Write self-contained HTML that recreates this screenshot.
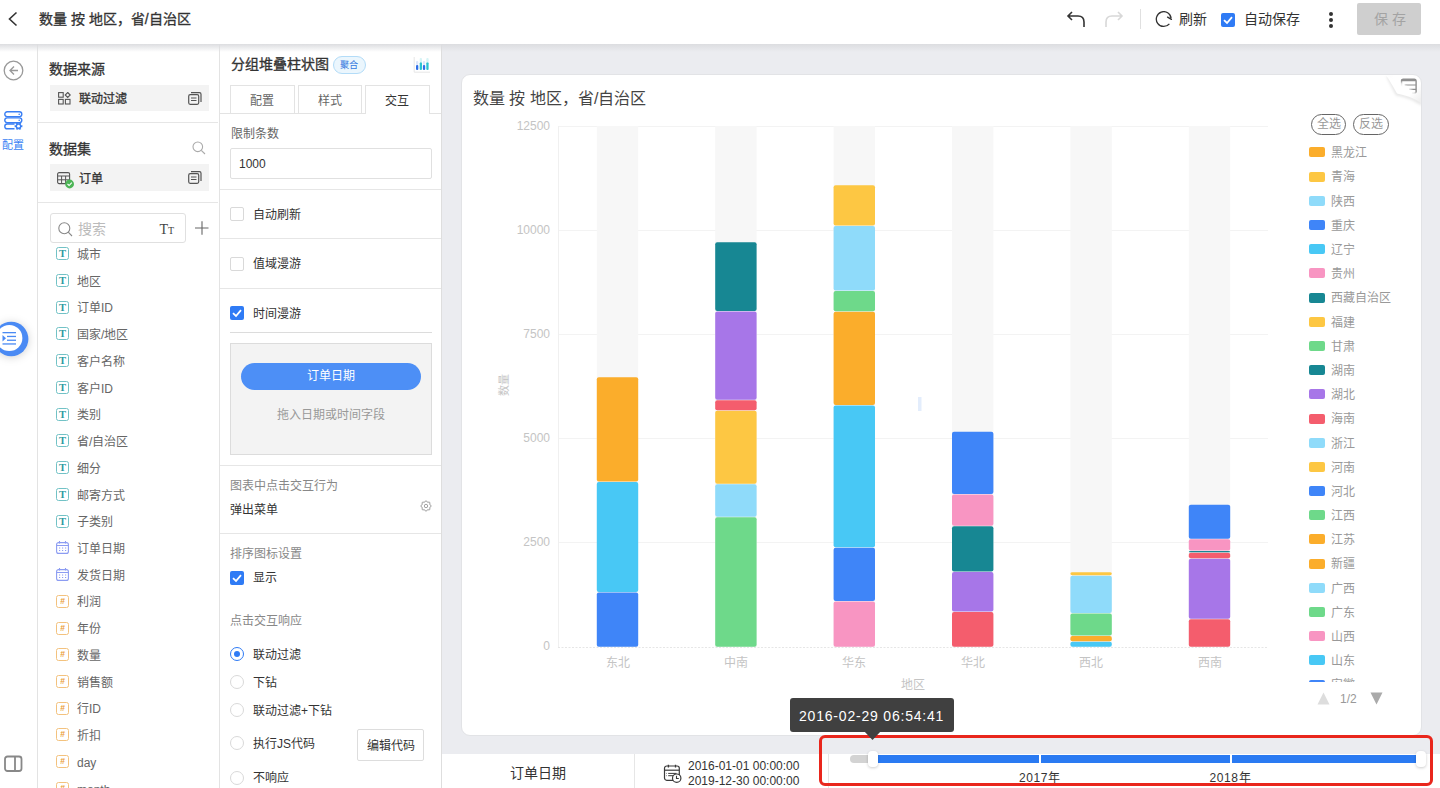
<!DOCTYPE html>
<html lang="zh-CN"><head><meta charset="utf-8">
<style>
*{box-sizing:border-box;margin:0;padding:0}
html,body{width:1440px;height:788px;overflow:hidden;background:#fff;font-family:"Liberation Sans",sans-serif;color:#333}
.a{position:absolute}
.t{position:absolute;white-space:nowrap;line-height:1}
#hdr{left:0;top:0;width:1440px;height:44px;background:#fff;z-index:5}
#hdrsh{left:0;top:44px;width:1440px;height:8px;background:linear-gradient(#dcdde0,rgba(235,236,240,0));z-index:4}
#rail{left:0;top:44px;width:38px;height:744px;background:#fff;border-right:1px solid #e3e3e3}
#data{left:38px;top:44px;width:182px;height:744px;background:#fff;border-right:1px solid #e3e3e3}
#cfg{left:220px;top:44px;width:222px;height:744px;background:#fff;border-right:1px solid #dedede}
#canvas{left:442px;top:44px;width:998px;height:710px;background:#ebecf0}
#card{left:461px;top:74px;width:961px;height:662px;background:#fff;border:1px solid #e2e3e6;border-radius:9px}
#bot{left:442px;top:754px;width:998px;height:34px;background:#fff}
.sep{position:absolute;height:1px;background:#e6e6e6}
.cb{position:absolute;width:14px;height:14px;border:1px solid #d9d9d9;border-radius:2px;background:#fff}
.cbk{position:absolute;width:14px;height:14px;border-radius:2px;background:#2f7bf5}
.rd{position:absolute;width:14px;height:14px;border:1px solid #d9d9d9;border-radius:50%;background:#fff}
.f{position:absolute;left:77px;font-size:12px;color:#666;line-height:1;white-space:nowrap}
.fi{position:absolute;left:56px;width:13px;height:13px;border-radius:2.5px;border:1px solid #72c2c6;color:#2f9aa2;font-size:10.5px;line-height:12px;text-align:center;font-family:'Liberation Serif',serif;font-weight:bold}
.fd{position:absolute;left:56px;width:13px;height:13px}
.fn{position:absolute;left:56px;width:13px;height:13px;border-radius:2.5px;border:1px solid #f3c27e;color:#eb9d35;font-size:8.5px;line-height:11.5px;text-align:center;font-weight:bold}
.lg{position:absolute;left:1309px;width:16px;height:10px;border-radius:2px}
.lt{position:absolute;left:1330.5px;font-size:12px;color:#999;line-height:1;white-space:nowrap}
</style></head><body>

<!-- header -->
<div id="hdr" class="a">
  <svg class="a" style="left:7px;top:11px" width="12" height="16" viewBox="0 0 12 16"><path d="M9.5 1.5 L2.5 8 L9.5 14.5" fill="none" stroke="#333" stroke-width="1.6"></path></svg>
  <div class="t" style="left:39px;top:12px;font-size:14px;-webkit-text-stroke:0.3px #333;color:#333">数量 按 地区，省/自治区</div>
  <!-- undo -->
  <svg class="a" style="left:1066px;top:10px" width="20" height="18" viewBox="0 0 20 18"><path d="M6 2 L2 6 L6 10 M2 6 H12 Q18 6 18 12 V17" fill="none" stroke="#333" stroke-width="1.6"></path></svg>
  <svg class="a" style="left:1104px;top:10px" width="20" height="18" viewBox="0 0 20 18"><path d="M14 2 L18 6 L14 10 M18 6 H8 Q2 6 2 12 V17" fill="none" stroke="#d8d8d8" stroke-width="1.6"></path></svg>
  <div class="a" style="left:1140px;top:9px;width:1px;height:20px;background:#e0e0e0"></div>
  <svg class="a" style="left:1154px;top:11px" width="20" height="18" viewBox="0 0 20 18"><path d="M15.4 12.8 A7.4 7.4 0 1 1 17.1 7.4" fill="none" stroke="#333" stroke-width="1.3"></path><path d="M13.6 6.2 L17.4 8.3" fill="none" stroke="#333" stroke-width="1.4" stroke-linecap="round"></path></svg>
  <div class="t" style="left:1179px;top:12px;font-size:14px;color:#333">刷新</div>
  <div class="cbk" style="left:1221px;top:13px"><svg width="14" height="14" viewBox="0 0 14 14"><path d="M3 7.2 L6 10 L11 4.2" fill="none" stroke="#fff" stroke-width="1.8"></path></svg></div>
  <div class="t" style="left:1244px;top:12px;font-size:14px;color:#333">自动保存</div>
  <div class="a" style="left:1329px;top:12px;width:4px;height:4px;border-radius:2px;background:#333"></div>
  <div class="a" style="left:1329px;top:18px;width:4px;height:4px;border-radius:2px;background:#333"></div>
  <div class="a" style="left:1329px;top:24px;width:4px;height:4px;border-radius:2px;background:#333"></div>
  <div class="a" style="left:1357px;top:3px;width:64px;height:32px;background:#cfcfcf;border-radius:2px"></div>
  <div class="t" style="left:1374px;top:12px;font-size:14px;color:#a3a3a3;">保 存</div>
</div>
<div id="hdrsh" class="a"></div>

<!-- left rail -->
<div id="rail" class="a"></div>
<svg class="a" style="left:3px;top:60px" width="21" height="21" viewBox="0 0 21 21"><circle cx="10.5" cy="10.5" r="9.3" fill="none" stroke="#999" stroke-width="1.3"></circle><path d="M11 6.5 L7 10.5 L11 14.5 M7 10.5 H15" fill="none" stroke="#999" stroke-width="1.3"></path></svg>
<svg class="a" style="left:4px;top:111px" width="20" height="20" viewBox="0 0 20 20"><rect x="0.8" y="0.8" width="17" height="4.8" rx="2.4" fill="none" stroke="#3a7ff4" stroke-width="1.4"></rect><rect x="0.8" y="6.9" width="17" height="4.8" rx="2.4" fill="none" stroke="#3a7ff4" stroke-width="1.4"></rect><path d="M10.5 17.8 H3.2 A2.4 2.4 0 0 1 3.2 13 H10.5" fill="none" stroke="#3a7ff4" stroke-width="1.4"></path><circle cx="15.2" cy="3.2" r="0.8" fill="#3a7ff4"></circle><circle cx="15.2" cy="9.3" r="0.8" fill="#3a7ff4"></circle><path d="M18.34 14.09 L18.34 16.31 L17.51 15.95 L16.65 17.43 L17.38 17.98 L15.46 19.08 L15.36 18.18 L13.64 18.18 L13.54 19.08 L11.62 17.98 L12.35 17.43 L11.49 15.95 L10.66 16.31 L10.66 14.09 L11.49 14.45 L12.35 12.97 L11.62 12.42 L13.54 11.32 L13.64 12.22 L15.36 12.22 L15.46 11.32 L17.38 12.42 L16.65 12.97 L17.51 14.45 Z" fill="#3a7ff4"></path><circle cx="14.5" cy="15.2" r="1.4" fill="#fff"></circle></svg>
<div class="t" style="left:2px;top:140px;font-size:11px;color:#3a7ff4">配置</div>
<svg class="a" style="left:-8px;top:319px;filter:drop-shadow(0 1px 4px rgba(0,0,0,0.18))" width="40" height="40" viewBox="-8 319 40 40"><circle cx="11.2" cy="339" r="17.2" fill="#4a8af4"></circle><circle cx="9.3" cy="338" r="13.1" fill="#fff"></circle></svg>
<svg class="a" style="left:2px;top:332px" width="15" height="13" viewBox="0 0 15 13"><rect x="0.5" y="0" width="13.5" height="1.3" fill="#4a8af4"></rect><rect x="5" y="3.8" width="9" height="1.3" fill="#4a8af4"></rect><rect x="5" y="7.6" width="9" height="1.3" fill="#4a8af4"></rect><rect x="0.5" y="11.3" width="13.5" height="1.3" fill="#4a8af4"></rect><path d="M0.5 3 L4 6.3 L0.5 9.6 Z" fill="#4a8af4"></path></svg>
<svg class="a" style="left:4px;top:755px" width="19" height="18" viewBox="0 0 19 18"><rect x="1" y="1.5" width="16.5" height="14.5" rx="2.5" fill="none" stroke="#888" stroke-width="1.8"></rect><path d="M11 1.5 V16" stroke="#888" stroke-width="1.8"></path></svg>

<!-- data panel -->
<div id="data" class="a"></div>
<div class="t" style="left:49px;top:62px;font-size:14px;-webkit-text-stroke:0.3px #333;color:#333">数据来源</div>
<div class="a" style="left:50px;top:85px;width:159px;height:26px;background:#f3f3f3"></div>
<svg class="a" style="left:58px;top:92px" width="13" height="13" viewBox="0 0 13 13"><rect x="0.6" y="0.6" width="4.6" height="4.6" fill="none" stroke="#555" stroke-width="1.1"></rect><rect x="0.6" y="7.4" width="4.6" height="4.6" fill="none" stroke="#555" stroke-width="1.1"></rect><rect x="7.4" y="7.4" width="4.6" height="4.6" fill="none" stroke="#555" stroke-width="1.1"></rect><path d="M9.7 0.5 L12.2 3 L9.7 5.5 L7.2 3 Z" fill="none" stroke="#555" stroke-width="1.1"></path></svg>
<div class="t" style="left:79px;top:93px;font-size:12px;-webkit-text-stroke:0.3px #333;color:#333">联动过滤</div>
<svg class="a" style="left:188px;top:92px" width="14" height="13" viewBox="0 0 14 13"><rect x="0.7" y="2.7" width="10" height="9.6" rx="1.5" fill="none" stroke="#555" stroke-width="1.2"></rect><path d="M3 0.7 H11.5 A1.5 1.5 0 0 1 13 2.2 V10" fill="none" stroke="#555" stroke-width="1.2"></path><path d="M3 6 H8.5 M3 8.5 H8.5" stroke="#555" stroke-width="1"></path></svg>
<div class="sep" style="left:38px;top:122px;width:180px"></div>
<div class="t" style="left:49px;top:142px;font-size:14px;-webkit-text-stroke:0.3px #333;color:#333">数据集</div>
<svg class="a" style="left:192px;top:141px" width="14" height="14" viewBox="0 0 14 14"><circle cx="5.8" cy="5.8" r="4.8" fill="none" stroke="#aaa" stroke-width="1.1"></circle><path d="M9.3 9.3 L13 13" stroke="#aaa" stroke-width="1.1"></path></svg>
<div class="a" style="left:50px;top:164px;width:159px;height:27px;background:#f3f3f3"></div>
<svg class="a" style="left:57px;top:172px" width="18" height="17" viewBox="0 0 18 17"><rect x="0.6" y="0.6" width="12" height="11" rx="1.5" fill="none" stroke="#555" stroke-width="1.1"></rect><path d="M0.6 4 H12.6 M0.6 7.8 H12.6 M4.6 4 V11.6 M8.6 4 V11.6" stroke="#555" stroke-width="1"></path><circle cx="12.6" cy="12" r="4.4" fill="#4cb556"></circle><path d="M10.5 12 L12.1 13.5 L14.8 10.6" fill="none" stroke="#fff" stroke-width="1.1"></path></svg>
<div class="t" style="left:79px;top:172.5px;font-size:12px;-webkit-text-stroke:0.3px #333;color:#333">订单</div>
<svg class="a" style="left:188px;top:171px" width="14" height="13" viewBox="0 0 14 13"><rect x="0.7" y="2.7" width="10" height="9.6" rx="1.5" fill="none" stroke="#555" stroke-width="1.2"></rect><path d="M3 0.7 H11.5 A1.5 1.5 0 0 1 13 2.2 V10" fill="none" stroke="#555" stroke-width="1.2"></path><path d="M3 6 H8.5 M3 8.5 H8.5" stroke="#555" stroke-width="1"></path></svg>
<div class="sep" style="left:38px;top:202px;width:180px"></div>
<div class="a" style="left:50px;top:213px;width:136px;height:30px;border:1px solid #e0e0e0;border-radius:3px;background:#fff"></div>
<svg class="a" style="left:58px;top:222px" width="15" height="15" viewBox="0 0 15 15"><circle cx="6.3" cy="6.3" r="5.5" fill="none" stroke="#888" stroke-width="1.1"></circle><path d="M10.2 10.2 L14 14" stroke="#888" stroke-width="1.1"></path></svg>
<div class="t" style="left:78px;top:222px;font-size:14px;color:#bbb">搜索</div>
<div class="t" style="left:159.5px;top:222.5px;font-size:14px;color:#444;font-family:'Liberation Serif',serif">T<span style="font-size:10px">T</span></div>
<svg class="a" style="left:195px;top:221px" width="14" height="14" viewBox="0 0 14 14"><path d="M7 0.3 V13.7 M0 7 H13.5" stroke="#666" stroke-width="1.1"></path></svg>
<div id="fields"><div class="a" style="left:38px;top:243px;width:180px;height:545px;overflow:hidden"><div class="a" style="left:-38px;top:-243px;width:300px;height:1100px"><div class="fi" style="top:247.1px">T</div><div class="f" style="top:248.8px">城市</div><div class="fi" style="top:273.8px">T</div><div class="f" style="top:275.5px">地区</div><div class="fi" style="top:300.6px">T</div><div class="f" style="top:302.3px">订单ID</div><div class="fi" style="top:327.3px">T</div><div class="f" style="top:329.0px">国家/地区</div><div class="fi" style="top:354.1px">T</div><div class="f" style="top:355.8px">客户名称</div><div class="fi" style="top:380.8px">T</div><div class="f" style="top:382.5px">客户ID</div><div class="fi" style="top:407.5px">T</div><div class="f" style="top:409.2px">类别</div><div class="fi" style="top:434.3px">T</div><div class="f" style="top:436.0px">省/自治区</div><div class="fi" style="top:461.0px">T</div><div class="f" style="top:462.7px">细分</div><div class="fi" style="top:487.8px">T</div><div class="f" style="top:489.5px">邮寄方式</div><div class="fi" style="top:514.5px">T</div><div class="f" style="top:516.2px">子类别</div><svg class="fd" style="top:541.2px" viewBox="0 0 13 13"><rect x="0.6" y="1.6" width="11.8" height="10.8" rx="2" fill="none" stroke="#8c9cf2" stroke-width="1.1"></rect><path d="M0.6 4.5 H12.4 M3.5 0 V2.5 M9.5 0 V2.5" stroke="#8c9cf2" stroke-width="1.1"></path><path d="M3 7 H4.2 M6 7 H7.2 M9 7 H10.2 M3 9.5 H4.2 M6 9.5 H7.2 M9 9.5 H10.2" stroke="#8c9cf2" stroke-width="1"></path></svg><div class="f" style="top:542.9px">订单日期</div><svg class="fd" style="top:568.0px" viewBox="0 0 13 13"><rect x="0.6" y="1.6" width="11.8" height="10.8" rx="2" fill="none" stroke="#8c9cf2" stroke-width="1.1"></rect><path d="M0.6 4.5 H12.4 M3.5 0 V2.5 M9.5 0 V2.5" stroke="#8c9cf2" stroke-width="1.1"></path><path d="M3 7 H4.2 M6 7 H7.2 M9 7 H10.2 M3 9.5 H4.2 M6 9.5 H7.2 M9 9.5 H10.2" stroke="#8c9cf2" stroke-width="1"></path></svg><div class="f" style="top:569.7px">发货日期</div><div class="fn" style="top:594.7px">#</div><div class="f" style="top:596.4px">利润</div><div class="fn" style="top:621.5px">#</div><div class="f" style="top:623.2px">年份</div><div class="fn" style="top:648.2px">#</div><div class="f" style="top:649.9px">数量</div><div class="fn" style="top:674.9px">#</div><div class="f" style="top:676.6px">销售额</div><div class="fn" style="top:701.7px">#</div><div class="f" style="top:703.4px">行ID</div><div class="fn" style="top:728.4px">#</div><div class="f" style="top:730.1px">折扣</div><div class="fn" style="top:755.2px">#</div><div class="f" style="top:756.9px">day</div><div class="fn" style="top:781.9px">#</div><div class="f" style="top:783.6px">month</div></div></div></div>

<!-- config panel -->
<div id="cfg" class="a"></div>
<div class="t" style="left:231px;top:57px;font-size:14px;-webkit-text-stroke:0.3px #333;color:#333">分组堆叠柱状图</div>
<div class="a" style="left:333px;top:56px;width:33px;height:18px;border:1px solid #b3dcf8;background:#ebf6fd;border-radius:9px"></div>
<div class="t" style="left:340px;top:60.5px;font-size:9.2px;color:#3478e0">聚合</div>
<svg class="a" style="left:413px;top:56px" width="18" height="18" viewBox="0 0 18 18"><path d="M1.2 1 V16.2 H17" fill="none" stroke="#e6e6e6" stroke-width="1"></path><rect x="3" y="9" width="2.3" height="5" rx="1" fill="#2f6fe8"></rect><rect x="3" y="5" width="2.3" height="4" rx="1" fill="#dde6fb"></rect><rect x="6.7" y="6.3" width="2.3" height="7.7" rx="1" fill="#2cc4d0"></rect><rect x="6.7" y="2" width="2.3" height="4.3" rx="1" fill="#d6f4f6"></rect><rect x="9.9" y="9" width="2.3" height="5" rx="1" fill="#2f6fe8"></rect><rect x="9.9" y="5" width="2.3" height="4" rx="1" fill="#dde6fb"></rect><rect x="13.3" y="6.3" width="2.3" height="7.7" rx="1" fill="#2cc4d0"></rect><rect x="13.3" y="2" width="2.3" height="4.3" rx="1" fill="#d6f4f6"></rect></svg>
<div class="a" style="left:230px;top:85px;width:65px;height:29px;border:1px solid #e3e3e3;border-bottom:none;background:#fff"></div>
<div class="a" style="left:298px;top:85px;width:64px;height:29px;border:1px solid #e3e3e3;border-bottom:none;background:#fff"></div>
<div class="sep" style="left:220px;top:113px;width:221px;background:#e3e3e3"></div>
<div class="a" style="left:365px;top:85px;width:65px;height:29px;border:1px solid #e3e3e3;border-bottom:none;background:#fff"></div>
<div class="t" style="left:250px;top:95px;font-size:12px;color:#666">配置</div>
<div class="t" style="left:318px;top:95px;font-size:12px;color:#666">样式</div>
<div class="t" style="left:385px;top:95px;font-size:12px;color:#333">交互</div>
<div class="t" style="left:231px;top:128px;font-size:12px;color:#666">限制条数</div>
<div class="a" style="left:230px;top:148px;width:202px;height:31px;border:1px solid #e0e0e0;border-radius:2px"></div>
<div class="t" style="left:239px;top:158px;font-size:12px;color:#333">1000</div>
<div class="sep" style="left:220px;top:189px;width:221px"></div>
<div class="cb" style="left:230px;top:207px"></div>
<div class="t" style="left:253px;top:209px;font-size:12px;color:#333">自动刷新</div>
<div class="sep" style="left:220px;top:238px;width:221px"></div>
<div class="cb" style="left:230px;top:257px"></div>
<div class="t" style="left:253px;top:258px;font-size:12px;color:#333">值域漫游</div>
<div class="sep" style="left:220px;top:288px;width:221px"></div>
<div class="cbk" style="left:230px;top:306px"><svg width="14" height="14" viewBox="0 0 14 14"><path d="M3 7.2 L6 10 L11 4.2" fill="none" stroke="#fff" stroke-width="1.8"></path></svg></div>
<div class="t" style="left:253px;top:308px;font-size:12px;color:#333">时间漫游</div>
<div class="sep" style="left:230px;top:332px;width:202px;background:#dcdcdc"></div>
<div class="a" style="left:230px;top:343px;width:202px;height:112px;border:1px solid #dcdcdc;background:#f3f3f3"></div>
<div class="a" style="left:241px;top:363px;width:180px;height:27px;border-radius:13.5px;background:#4d8ff6"></div>
<div class="t" style="left:307px;top:370px;font-size:12px;color:#fff">订单日期</div>
<div class="t" style="left:277px;top:409px;font-size:12px;color:#999">拖入日期或时间字段</div>
<div class="sep" style="left:220px;top:465px;width:221px"></div>
<div class="t" style="left:230px;top:480px;font-size:12px;color:#888">图表中点击交互行为</div>
<div class="t" style="left:230px;top:503.5px;font-size:12px;color:#333">弹出菜单</div>
<svg class="a" style="left:419.7px;top:499.6px" width="12" height="12" viewBox="0 0 12 12"><path d="M11.15 6.00 L11.07 6.33 L10.83 6.64 L10.51 6.90 L10.18 7.12 L9.90 7.33 L9.74 7.55 L9.70 7.82 L9.75 8.16 L9.82 8.56 L9.87 8.97 L9.82 9.35 L9.64 9.64 L9.35 9.82 L8.97 9.87 L8.56 9.82 L8.16 9.75 L7.82 9.70 L7.55 9.74 L7.33 9.90 L7.12 10.18 L6.90 10.51 L6.64 10.83 L6.33 11.07 L6.00 11.15 L5.67 11.07 L5.36 10.83 L5.10 10.51 L4.88 10.18 L4.67 9.90 L4.45 9.74 L4.18 9.70 L3.84 9.75 L3.44 9.82 L3.03 9.87 L2.65 9.82 L2.36 9.64 L2.18 9.35 L2.13 8.97 L2.18 8.56 L2.25 8.16 L2.30 7.82 L2.26 7.55 L2.10 7.33 L1.82 7.12 L1.49 6.90 L1.17 6.64 L0.93 6.33 L0.85 6.00 L0.93 5.67 L1.17 5.36 L1.49 5.10 L1.82 4.88 L2.10 4.67 L2.26 4.45 L2.30 4.18 L2.25 3.84 L2.18 3.44 L2.13 3.03 L2.18 2.65 L2.36 2.36 L2.65 2.18 L3.03 2.13 L3.44 2.18 L3.84 2.25 L4.18 2.30 L4.45 2.26 L4.67 2.10 L4.88 1.82 L5.10 1.49 L5.36 1.17 L5.67 0.93 L6.00 0.85 L6.33 0.93 L6.64 1.17 L6.90 1.49 L7.12 1.82 L7.33 2.10 L7.55 2.26 L7.82 2.30 L8.16 2.25 L8.56 2.18 L8.97 2.13 L9.35 2.18 L9.64 2.36 L9.82 2.65 L9.87 3.03 L9.82 3.44 L9.75 3.84 L9.70 4.18 L9.74 4.45 L9.90 4.67 L10.18 4.88 L10.51 5.10 L10.83 5.36 L11.07 5.67 Z" fill="none" stroke="#8f8f8f" stroke-width="1"/><circle cx="6" cy="6" r="1.7" fill="none" stroke="#999" stroke-width="0.9"/></svg>
<div class="sep" style="left:220px;top:533px;width:221px"></div>
<div class="t" style="left:230px;top:548px;font-size:12px;color:#888">排序图标设置</div>
<div class="cbk" style="left:230px;top:571px"><svg width="14" height="14" viewBox="0 0 14 14"><path d="M3 7.2 L6 10 L11 4.2" fill="none" stroke="#fff" stroke-width="1.8"></path></svg></div>
<div class="t" style="left:253px;top:572px;font-size:12px;color:#333">显示</div>
<div class="t" style="left:230px;top:615px;font-size:12px;color:#888">点击交互响应</div>
<div class="rd" style="left:230px;top:647px;border-color:#2f7bf5"><div class="a" style="left:3px;top:3px;width:6px;height:6px;border-radius:3px;background:#2f7bf5"></div></div>
<div class="t" style="left:253px;top:649px;font-size:12px;color:#333">联动过滤</div>
<div class="rd" style="left:230px;top:675px"></div>
<div class="t" style="left:253px;top:677px;font-size:12px;color:#333">下钻</div>
<div class="rd" style="left:230px;top:703px"></div>
<div class="t" style="left:253px;top:705px;font-size:12px;color:#333">联动过滤+下钻</div>
<div class="rd" style="left:230px;top:736px"></div>
<div class="t" style="left:253px;top:738px;font-size:12px;color:#333">执行JS代码</div>
<div class="a" style="left:357px;top:729px;width:67px;height:32px;border:1px solid #ddd;border-radius:2px;background:#fff"></div>
<div class="t" style="left:367px;top:740px;font-size:12px;color:#333">编辑代码</div>
<div class="rd" style="left:230px;top:771px"></div>
<div class="t" style="left:253px;top:772px;font-size:12px;color:#333">不响应</div>

<!-- canvas -->
<div id="canvas" class="a"></div>
<div id="card" class="a"></div>
<div class="t" style="left:473px;top:91px;font-size:16px;color:#444">数量 按 地区，省/自治区</div>
<svg class="a" style="left:1380px;top:74px" width="42" height="36" viewBox="1380 74 42 36"><defs><linearGradient id="fl" x1="1406.6" y1="90.4" x2="1409.4" y2="86.6" gradientUnits="userSpaceOnUse"><stop offset="0" stop-color="#fff" stop-opacity="1"></stop><stop offset="0.5" stop-color="#fff" stop-opacity="0.8"></stop><stop offset="1" stop-color="#fff" stop-opacity="0"></stop></linearGradient><linearGradient id="fs" x1="1400" y1="80" x2="1420" y2="100" gradientUnits="userSpaceOnUse"><stop offset="0.6" stop-color="#000" stop-opacity="0"></stop><stop offset="1" stop-color="#000" stop-opacity="0.06"></stop></linearGradient><filter id="bl" x="-50%" y="-50%" width="200%" height="200%"><feGaussianBlur stdDeviation="1.6"></feGaussianBlur></filter><clipPath id="cc"><rect x="1380" y="75" width="41" height="40" rx="8"></rect></clipPath></defs>
<g clip-path="url(#cc)"><path d="M1401.5 93 V81 A1.8 1.8 0 0 1 1403.3 79.2 H1414.3 A1.8 1.8 0 0 1 1416.1 81 V91.5 A1.8 1.8 0 0 1 1414.3 93.3 H1412" fill="none" stroke="#8f8f8f" stroke-width="1.4"></path><path d="M1401.5 80.2 H1416" stroke="#8f8f8f" stroke-width="2"></path><path d="M1404.6 85 H1416 M1409 89.4 H1416" stroke="#8f8f8f" stroke-width="1.2"></path>
<path d="M1388 76 Q1393 86 1397 94 Q1410 96 1422 104" fill="none" stroke="#000" stroke-opacity="0.13" stroke-width="2.5" filter="url(#bl)"></path>
<path d="M1386 75 Q1393 86 1397 93.6 Q1410 96 1422 103 L1422 75 Z" fill="url(#fl)"></path><path d="M1386 75 Q1393 86 1397 93.6 Q1410 96 1422 103 L1422 75 Z" fill="url(#fs)"></path></g></svg>
<svg id="chart" class="a" style="left:0;top:0" width="1440" height="788"><line x1="558" x2="1268" y1="126.5" y2="126.5" stroke="#f3f3f3"></line><line x1="558" x2="1268" y1="230.5" y2="230.5" stroke="#f3f3f3"></line><line x1="558" x2="1268" y1="334.5" y2="334.5" stroke="#f3f3f3"></line><line x1="558" x2="1268" y1="438.5" y2="438.5" stroke="#f3f3f3"></line><line x1="558" x2="1268" y1="542.5" y2="542.5" stroke="#f3f3f3"></line><line x1="558.5" x2="558.5" y1="126" y2="647" stroke="#f0f0f0"></line><line x1="558" x2="1268" y1="647.5" y2="647.5" stroke="#e6e6e6" stroke-dasharray="2 1.5"></line><text x="550" y="130.3" text-anchor="end" font-size="12" fill="#c4c4c4">12500</text><text x="550" y="234.3" text-anchor="end" font-size="12" fill="#c4c4c4">10000</text><text x="550" y="338.3" text-anchor="end" font-size="12" fill="#c4c4c4">7500</text><text x="550" y="442.3" text-anchor="end" font-size="12" fill="#c4c4c4">5000</text><text x="550" y="546.3" text-anchor="end" font-size="12" fill="#c4c4c4">2500</text><text x="550" y="650.3" text-anchor="end" font-size="12" fill="#c4c4c4">0</text><rect x="596.8" y="126" width="41.4" height="521" fill="#f7f7f7"></rect><rect x="596.8" y="592.45" width="41.4" height="54.299999999999955" rx="2" fill="#3f85f8"></rect><rect x="596.8" y="482.05" width="41.4" height="109.90000000000003" rx="2" fill="#48c8f5"></rect><rect x="596.8" y="377.35" width="41.4" height="104.19999999999999" rx="2" fill="#fbad2b"></rect><text x="617.5" y="667" text-anchor="middle" font-size="12" fill="#c4c4c4">东北</text><rect x="715.1999999999999" y="126" width="41.4" height="521" fill="#f7f7f7"></rect><rect x="715.1999999999999" y="517.25" width="41.4" height="129.5" rx="2" fill="#6ed98a"></rect><rect x="715.1999999999999" y="484.25" width="41.4" height="32.5" rx="2" fill="#8fdbfa"></rect><rect x="715.1999999999999" y="410.75" width="41.4" height="73" rx="2" fill="#fdc743"></rect><rect x="715.1999999999999" y="400.15" width="41.4" height="10.100000000000023" rx="2" fill="#f45d6d"></rect><rect x="715.1999999999999" y="311.45" width="41.4" height="88.19999999999999" rx="2" fill="#a776e8"></rect><rect x="715.1999999999999" y="242.25" width="41.4" height="68.69999999999999" rx="2" fill="#178793"></rect><text x="735.9" y="667" text-anchor="middle" font-size="12" fill="#c4c4c4">中南</text><rect x="833.5999999999999" y="126" width="41.4" height="521" fill="#f7f7f7"></rect><rect x="833.5999999999999" y="601.45" width="41.4" height="45.299999999999955" rx="2" fill="#f895c2"></rect><rect x="833.5999999999999" y="547.65" width="41.4" height="53.30000000000007" rx="2" fill="#3f85f8"></rect><rect x="833.5999999999999" y="405.45" width="41.4" height="141.7" rx="2" fill="#48c8f5"></rect><rect x="833.5999999999999" y="311.85" width="41.4" height="93.09999999999997" rx="2" fill="#fbad2b"></rect><rect x="833.5999999999999" y="290.95" width="41.4" height="20.400000000000034" rx="2" fill="#6ed98a"></rect><rect x="833.5999999999999" y="226.05" width="41.4" height="64.39999999999998" rx="2" fill="#8fdbfa"></rect><rect x="833.5999999999999" y="185.15" width="41.4" height="40.400000000000006" rx="2" fill="#fdc743"></rect><text x="854.3" y="667" text-anchor="middle" font-size="12" fill="#c4c4c4">华东</text><rect x="952" y="126" width="41.4" height="521" fill="#f7f7f7"></rect><rect x="952" y="612.05" width="41.4" height="34.700000000000045" rx="2" fill="#f45d6d"></rect><rect x="952" y="571.95" width="41.4" height="39.59999999999991" rx="2" fill="#a776e8"></rect><rect x="952" y="526.15" width="41.4" height="45.30000000000007" rx="2" fill="#178793"></rect><rect x="952" y="494.55" width="41.4" height="31.099999999999966" rx="2" fill="#f895c2"></rect><rect x="952" y="431.75" width="41.4" height="62.30000000000001" rx="2" fill="#3f85f8"></rect><text x="972.7" y="667" text-anchor="middle" font-size="12" fill="#c4c4c4">华北</text><rect x="1070.3999999999999" y="126" width="41.4" height="521" fill="#f7f7f7"></rect><rect x="1070.3999999999999" y="641.75" width="41.4" height="5" rx="2" fill="#48c8f5"></rect><rect x="1070.3999999999999" y="636.05" width="41.4" height="5.2000000000000455" rx="2" fill="#fbad2b"></rect><rect x="1070.3999999999999" y="613.55" width="41.4" height="22" rx="2" fill="#6ed98a"></rect><rect x="1070.3999999999999" y="575.75" width="41.4" height="37.299999999999955" rx="2" fill="#8fdbfa"></rect><rect x="1070.3999999999999" y="572.35" width="41.4" height="2.8999999999999773" rx="2" fill="#fdc743"></rect><text x="1091.1" y="667" text-anchor="middle" font-size="12" fill="#c4c4c4">西北</text><rect x="1188.8" y="126" width="41.4" height="521" fill="#f7f7f7"></rect><rect x="1188.8" y="619.15" width="41.4" height="27.600000000000023" rx="2" fill="#f45d6d"></rect><rect x="1188.8" y="558.75" width="41.4" height="59.89999999999998" rx="2" fill="#a776e8"></rect><rect x="1188.8" y="552.75" width="41.4" height="5.5" rx="2" fill="#f45d6d"></rect><rect x="1188.8" y="551.05" width="41.4" height="1.2000000000000455" rx="2" fill="#178793"></rect><rect x="1188.8" y="539.35" width="41.4" height="11.199999999999932" rx="2" fill="#f895c2"></rect><rect x="1188.8" y="504.65" width="41.4" height="34.200000000000045" rx="2" fill="#3f85f8"></rect><text x="1209.5" y="667" text-anchor="middle" font-size="12" fill="#c4c4c4">西南</text><text x="913" y="689" text-anchor="middle" font-size="12" fill="#c4c4c4">地区</text><text transform="translate(508,385) rotate(-90)" text-anchor="middle" font-size="11" fill="#c4c4c4">数量</text><rect x="918" y="397" width="3.5" height="14" fill="#e3edfc"></rect></svg>
<div id="legend"><div class="a" style="left:1300px;top:140px;width:110px;height:542px;overflow:hidden"><div class="a" style="left:-1300px;top:-140px;width:1440px;height:788px"><div class="lg" style="top:147.4px;background:#fbad2b"></div><div class="lt" style="top:147.2px">黑龙江</div><div class="lg" style="top:171.6px;background:#fdc743"></div><div class="lt" style="top:171.4px">青海</div><div class="lg" style="top:195.8px;background:#8fdbfa"></div><div class="lt" style="top:195.6px">陕西</div><div class="lg" style="top:220.0px;background:#3f85f8"></div><div class="lt" style="top:219.8px">重庆</div><div class="lg" style="top:244.2px;background:#48c8f5"></div><div class="lt" style="top:244.0px">辽宁</div><div class="lg" style="top:268.3px;background:#f895c2"></div><div class="lt" style="top:268.1px">贵州</div><div class="lg" style="top:292.5px;background:#178793"></div><div class="lt" style="top:292.3px">西藏自治区</div><div class="lg" style="top:316.7px;background:#fdc743"></div><div class="lt" style="top:316.5px">福建</div><div class="lg" style="top:340.9px;background:#6ed98a"></div><div class="lt" style="top:340.7px">甘肃</div><div class="lg" style="top:365.1px;background:#178793"></div><div class="lt" style="top:364.9px">湖南</div><div class="lg" style="top:389.3px;background:#a776e8"></div><div class="lt" style="top:389.1px">湖北</div><div class="lg" style="top:413.5px;background:#f45d6d"></div><div class="lt" style="top:413.3px">海南</div><div class="lg" style="top:437.7px;background:#8fdbfa"></div><div class="lt" style="top:437.5px">浙江</div><div class="lg" style="top:461.9px;background:#fdc743"></div><div class="lt" style="top:461.7px">河南</div><div class="lg" style="top:486.1px;background:#3f85f8"></div><div class="lt" style="top:485.9px">河北</div><div class="lg" style="top:510.2px;background:#6ed98a"></div><div class="lt" style="top:510.0px">江西</div><div class="lg" style="top:534.4px;background:#fbad2b"></div><div class="lt" style="top:534.2px">江苏</div><div class="lg" style="top:558.6px;background:#fbad2b"></div><div class="lt" style="top:558.4px">新疆</div><div class="lg" style="top:582.8px;background:#8fdbfa"></div><div class="lt" style="top:582.6px">广西</div><div class="lg" style="top:607.0px;background:#6ed98a"></div><div class="lt" style="top:606.8px">广东</div><div class="lg" style="top:631.2px;background:#f895c2"></div><div class="lt" style="top:631.0px">山西</div><div class="lg" style="top:655.4px;background:#48c8f5"></div><div class="lt" style="top:655.2px">山东</div><div class="lg" style="top:679.6px;background:#3f85f8"></div><div class="lt" style="top:679.4px">安徽</div></div></div><div class="a" style="left:1311px;top:114px;width:35px;height:21px;border:1px solid #666;border-radius:10.5px"></div><div class="t" style="left:1317px;top:118px;font-size:12px;color:#999">全选</div><div class="a" style="left:1353px;top:114px;width:36px;height:21px;border:1px solid #666;border-radius:10.5px"></div><div class="t" style="left:1359px;top:118px;font-size:12px;color:#999">反选</div><svg class="a" style="left:1317px;top:692px" width="13" height="13" viewBox="0 0 13 13"><path d="M6.5 0.5 L12.5 12.5 H0.5 Z" fill="#ddd"></path></svg><div class="t" style="left:1340px;top:693px;font-size:12px;color:#999">1/2</div><svg class="a" style="left:1370px;top:692px" width="13" height="13" viewBox="0 0 13 13"><path d="M0.5 0.5 H12.5 L6.5 12.5 Z" fill="#aaa"></path></svg></div>

<!-- bottom bar -->
<div id="bot" class="a"></div>
<div class="t" style="left:510px;top:766px;font-size:14px;color:#333">订单日期</div>
<div class="a" style="left:634px;top:754px;width:1px;height:34px;background:#e6e6e6"></div>
<svg class="a" style="left:662px;top:764px" width="22" height="22" viewBox="0 0 22 22"><rect x="2.5" y="2" width="14.8" height="14.3" rx="2.2" fill="none" stroke="#3a3a3a" stroke-width="1.2"/><path d="M6.4 0.8 V3.4 M13.5 0.8 V3.4" stroke="#3a3a3a" stroke-width="1.3"/><path d="M2.5 6.2 H17.3" stroke="#3a3a3a" stroke-width="1.2"/><path d="M4.5 9.4 H5 M4.5 11.7 H5 M6.2 9.4 H14.5 M6.2 11.7 H11" stroke="#3a3a3a" stroke-width="1"/><circle cx="14.7" cy="14.2" r="4.2" fill="#fff" stroke="#3a3a3a" stroke-width="1.2"/><path d="M14.5 11.8 V14.5 H16.8" fill="none" stroke="#3a3a3a" stroke-width="1.1"/></svg>
<div class="t" style="left:688px;top:760px;font-size:12px;color:#333">2016-01-01 00:00:00</div>
<div class="t" style="left:688px;top:775px;font-size:12px;color:#333">2019-12-30 00:00:00</div>
<div class="a" style="left:828px;top:754px;width:1px;height:34px;background:#e6e6e6"></div>
<div class="a" style="left:850px;top:755px;width:24px;height:8px;border-radius:4px;background:#d3d3d3"></div>
<div class="a" style="left:874px;top:755px;width:545px;height:8px;background:#2a7af2"></div>
<div class="a" style="left:1039px;top:755px;width:2px;height:8px;background:#fff"></div>
<div class="a" style="left:1230px;top:755px;width:2px;height:8px;background:#fff"></div>
<div class="a" style="left:868px;top:751px;width:10px;height:16px;border-radius:4px;background:#fff;box-shadow:0 1px 3px rgba(0,0,0,0.2)"></div>
<div class="a" style="left:1416px;top:751px;width:10px;height:16px;border-radius:4px;background:#fff;box-shadow:0 1px 3px rgba(0,0,0,0.2)"></div>
<div class="t" style="left:1019px;top:772px;font-size:12px;color:#333;letter-spacing:0.6px">2017年</div>
<div class="t" style="left:1209.5px;top:772px;font-size:12px;color:#333;letter-spacing:0.6px">2018年</div>
<div class="a" style="left:819px;top:735px;width:614px;height:51px;border:3px solid #e9261c;border-radius:6px"></div>
<div class="a" style="left:790px;top:698px;width:164px;height:34px;background:#404040;border-radius:3px"></div>
<svg class="a" style="left:864px;top:731px" width="17" height="10" viewBox="0 0 17 10"><path d="M0 0 H17 L8.5 9 Z" fill="#404040"></path></svg>
<div class="t" style="left:799px;top:709px;font-size:14px;color:#fff;letter-spacing:0.8px">2016-02-29 06:54:41</div>



</body></html>
